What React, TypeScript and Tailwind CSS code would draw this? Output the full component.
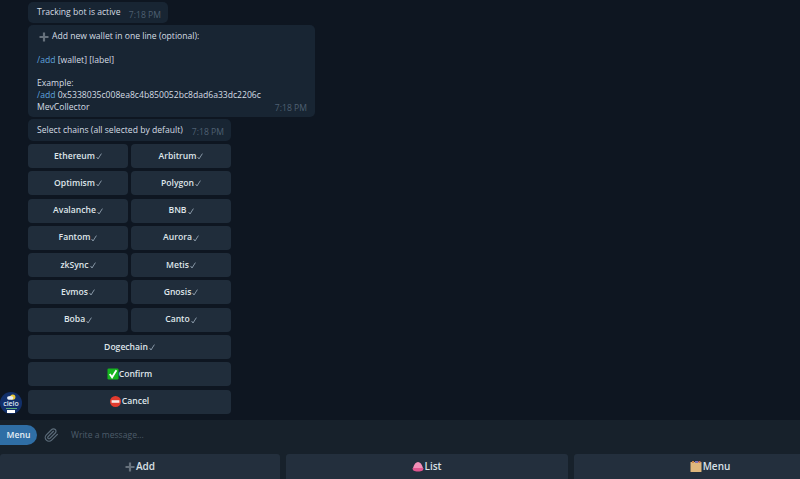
const pairs = [
  ["Ethereum", "Arbitrum"],
  ["Optimism", "Polygon"],
  ["Avalanche", "BNB"],
  ["Fantom", "Aurora"],
  ["zkSync", "Metis"],
  ["Evmos", "Gnosis"],
  ["Boba", "Canto"],
];

function Check() {
  return (
    <svg width="6" height="7" viewBox="0 0 6 7" className="ml-[1px] mt-[1px]" fill="none" stroke="#9fb0bf" strokeWidth="0.8">
      <path d="M0.6 4 L2 6 L5.4 0.6" />
    </svg>
  );
}

function KB({ children }: { children: React.ReactNode }) {
  return (
    <div className="h-6 rounded-[4px] bg-[#202d3b] flex items-center justify-center text-[8.6px] font-semibold text-[#dfe5ea]">
      {children}
    </div>
  );
}

function Time() {
  return <span className="text-[8.6px] text-[#4f6072] whitespace-nowrap">7:18 PM</span>;
}

function Plus({ size = 10, color = "#66717c" }: { size?: number; color?: string }) {
  return (
    <svg width={size} height={size} viewBox="0 0 10 10" className="shrink-0">
      <path d="M3.9 0.5h2.2v3.4h3.4v2.2H6.1v3.4H3.9V6.1H0.5V3.9h3.4z" fill={color} />
    </svg>
  );
}

export default function App() {
  return (
    <div className="w-[800px] h-[479px] overflow-hidden flex flex-col bg-[#0e1621] font-['Open_Sans',sans-serif] leading-[11px]">
      <div className="h-[420px] shrink-0 relative pl-[28px] pt-[2px] flex flex-col gap-[2px] text-[8.6px] text-[#d5dde4]">
        <div className="w-[140px] h-[21px] rounded-[5px] bg-[#182533] pl-[9px] pr-[7px] flex justify-between">
          <span className="mt-[5px]">Tracking bot is active</span>
          <span className="mt-[8px]"><Time /></span>
        </div>
        <div className="w-[287px] h-[92px] rounded-[5px] bg-[#182533] pl-[9px] pr-[8px] pt-[6px] relative leading-[11.8px]">
          <div className="flex items-center gap-[3px] pl-[2px]">
            <Plus size={10} />
            <span>Add new wallet in one line (optional):</span>
          </div>
          <div className="h-[11.8px]" />
          <div><span className="text-[#5fa3de]">/add</span> [wallet] [label]</div>
          <div className="h-[11.8px]" />
          <div>Example:</div>
          <div><span className="text-[#5fa3de]">/add</span> 0x5338035c008ea8c4b850052bc8dad6a33dc2206c</div>
          <div>MevCollector</div>
          <span className="absolute right-[8px] bottom-[2px]"><Time /></span>
        </div>
        <div className="w-[203px] h-[22px] rounded-[5px] bg-[#182533] pl-[9px] pr-[7px] flex justify-between">
          <span className="mt-[6px]">Select chains (all selected by default)</span>
          <span className="mt-[8px]"><Time /></span>
        </div>
        <div className="w-[203px] mt-[1px] flex flex-col gap-[3.3px]">
          {pairs.map(([a, b]) => (
            <div key={a} className="grid grid-cols-2 gap-[3px]">
              <KB>{a}<Check /></KB>
              <KB>{b}<Check /></KB>
            </div>
          ))}
          <KB>Dogechain<Check /></KB>
          <KB>
            <svg width="12" height="12" viewBox="0 0 13 13">
              <rect x="0.5" y="0.5" width="12" height="12" rx="1.5" fill="#16b51f" />
              <path d="M3 6.5 L5.5 10 L10.2 2.5" fill="none" stroke="#fff" strokeWidth="2" />
            </svg>
            Confirm
          </KB>
          <KB>
            <svg width="11" height="11" viewBox="0 0 11 11" className="mr-[1px]">
              <circle cx="5.5" cy="5.5" r="5.5" fill="#e23b2e" />
              <rect x="1.6" y="4.2" width="7.8" height="2.6" fill="#f5e8e4" />
            </svg>
            Cancel
          </KB>
        </div>
        <div className="absolute left-0 top-[392px] w-[22px] h-[22px] rounded-full bg-[#12306a] flex flex-col items-center overflow-hidden">
          <svg width="11" height="7" viewBox="0 0 12 8" className="mt-[2px] shrink-0">
            <circle cx="7.5" cy="3.5" r="3" fill="#e8c83a" />
            <ellipse cx="4.5" cy="4.5" rx="3.5" ry="2.2" fill="#e8eef6" />
          </svg>
          <span className="text-[7px] leading-[6px] text-[#dfe8f2] font-semibold">cielo</span>
          <div className="w-[11px] h-px bg-[#5fae7a] mt-[1px] shrink-0" />
          <div className="w-[8px] h-[3px] bg-white mt-px shrink-0" />
        </div>
      </div>

      <div className="h-[34px] shrink-0 bg-[#17212b] flex items-center pb-[4px]">
        <div className="h-5 w-[37px] rounded-r-[10px] bg-[#2f6ea5] flex items-center justify-center text-[8.6px] font-semibold text-[#e6eef5] shrink-0">
          Menu
        </div>
        <svg width="15" height="16" viewBox="0 0 24 24" fill="none" stroke="#5b6b79" strokeWidth="2" strokeLinecap="round" strokeLinejoin="round" className="ml-[7px] shrink-0">
          <path d="m21.44 11.05-9.19 9.19a6 6 0 0 1-8.49-8.49l8.57-8.57A4 4 0 1 1 18 8.84l-8.59 8.57a2 2 0 0 1-2.83-2.83l8.49-8.48" />
        </svg>
        <span className="ml-[12px] text-[8.6px] text-[#4d5c6a]">Write a message...</span>
      </div>

      <div className="h-[25px] shrink-0 bg-[#17212b] flex gap-[6px]">
        <div className="w-[280px] shrink-0 rounded-t-[3px] bg-[#232f3d] flex items-center justify-center text-[10px] font-semibold text-[#d9e0e6]">
          <Plus size={10} /><span className="ml-[1px]">Add</span>
        </div>
        <div className="w-[282px] shrink-0 rounded-t-[3px] bg-[#232f3d] flex items-center justify-center text-[10px] font-semibold text-[#d9e0e6]">
          <svg width="12" height="11" viewBox="0 0 12 11">
            <path d="M1 7 C2 3 4 1 6 1 C8 1 10 3 11 7 Z" fill="#f28fb8" />
            <path d="M0.5 7 H11.5 C11.5 9.5 10 10.5 6 10.5 C2 10.5 0.5 9.5 0.5 7 Z" fill="#e0558f" />
          </svg>
          List
        </div>
        <div className="w-[272px] shrink-0 rounded-t-[3px] bg-[#232f3d] flex items-center justify-center text-[10px] font-semibold text-[#d9e0e6]">
          <svg width="12" height="11" viewBox="0 0 12 11" className="mr-[1px]">
            <rect x="0.5" y="1" width="11" height="10" rx="0.5" fill="#dfb67c" />
            <rect x="2" y="0" width="2" height="2" fill="#c9844a" />
            <rect x="5" y="0" width="3" height="2" fill="#7a6fb0" />
            <rect x="8.5" y="0" width="2" height="2" fill="#c96a5a" />
          </svg>
          Menu
        </div>
      </div>
    </div>
  );
}
